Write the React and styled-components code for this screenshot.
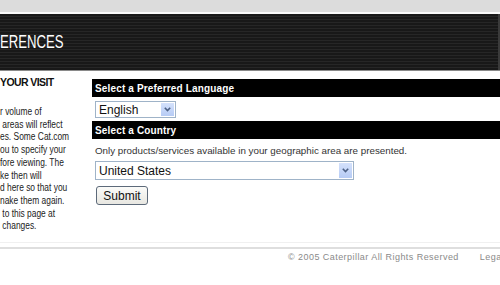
import React from 'react'
import styled, { createGlobalStyle } from 'styled-components'

const GlobalStyle = createGlobalStyle`
  html, body {
    margin: 0;
    padding: 0;
    background: #fff;
    overflow: hidden;
  }
  body {
    font-family: "Liberation Sans", Arial, sans-serif;
  }
`

const visitLines = [
  'r volume of',
  ' areas will reflect',
  'es. Some Cat.com',
  'ou to specify your',
  'fore viewing. The',
  'ke then will',
  'd here so that you',
  'nake them again.',
  ' to this page at',
  ' changes.',
]

const Page = styled.div`
  width: 500px;
  height: 285px;
  display: flex;
  flex-direction: column;
`

const BrowserStrip = styled.div`
  height: 12px;
  background: #dcdcdc;
  border-bottom: 2px solid #fafafa;
`

const Masthead = styled.div`
  height: 56px;
  display: flex;
  align-items: center;
  background: repeating-linear-gradient(
    to bottom,
    #181818 0px,
    #181818 2px,
    #262626 2px,
    #262626 3px
  );
  border-right: 2px solid #3a3a3a;
`

const Title = styled.h1`
  margin: 0;
  color: #fff;
  font-family: "Liberation Sans", Arial, sans-serif;
  font-weight: normal;
  font-size: 18px;
  transform: scaleX(0.73);
  transform-origin: left center;
`

const Body = styled.div`
  display: flex;
  border-top: 1px solid #8a8a8a;
  height: 171px;
`

const Sidebar = styled.div`
  width: 86px;
  padding-top: 5px;
  display: flex;
  flex-direction: column;
`

const SideHeading = styled.h2`
  margin: 0 0 17px 0;
  font-size: 10.5px;
  font-weight: bold;
  color: #111;
  letter-spacing: -0.6px;
`

const SideText = styled.div`
  transform: scaleX(0.8);
  transform-origin: left top;
`

const SideLine = styled.div`
  font-size: 10.5px;
  line-height: 12.7px;
  color: #222;
  white-space: pre;
`

const Main = styled.div`
  flex: 1;
  margin-left: 6px;
  padding-top: 8px;
  display: flex;
  flex-direction: column;
  align-items: flex-start;
`

const SectionBar = styled.div`
  align-self: stretch;
  height: 18px;
  background: #000;
  color: #fff;
  font-size: 10px;
  font-weight: bold;
  letter-spacing: 0.15px;
  display: flex;
  align-items: center;
  padding-left: 3px;
  margin-bottom: ${p => p.$gap}px;
`

const Note = styled.p`
  margin: 6px 0 5px 3px;
  font-size: 9.8px;
  color: #333;
`

const Dropdown = styled.div`
  width: ${p => p.$width}px;
  height: ${p => p.$height}px;
  margin-left: 3px;
  margin-bottom: ${p => p.$gap}px;
  box-sizing: border-box;
  border: 1px solid #9fb3c8;
  background: #fff;
  display: flex;
  align-items: center;
  justify-content: space-between;
  font-size: 12px;
  color: #111;
`

const DropdownValue = styled.span`
  padding-left: 3px;
`

const DropArrow = styled.span`
  width: 13px;
  align-self: stretch;
  margin: 1px;
  background: linear-gradient(#d4e1fb, #b6cbf5);
  display: flex;
  align-items: center;
  justify-content: center;
`

const SubmitButton = styled.button`
  margin-left: 4px;
  width: 52px;
  height: 19px;
  padding: 0;
  border: 1px solid #5d6a7a;
  border-radius: 3px;
  background: linear-gradient(#fbfbf9, #e8e7e1);
  font-family: "Liberation Sans", Arial, sans-serif;
  font-size: 12px;
  color: #111;
`

const Footer = styled.div`
  border-top: 1px solid #f0f0f0;
  padding-top: 4px;
`

const FooterRule = styled.div`
  height: 2px;
  background: #dedede;
`

const FooterText = styled.div`
  display: flex;
  gap: 21px;
  padding: 3px 0 0 288px;
  white-space: nowrap;
  font-size: 9px;
  letter-spacing: 0.45px;
  color: #8a8a8a;
`

function Chevron() {
  return (
    <svg width="7" height="5" viewBox="0 0 7 5">
      <path d="M0.8 0.8 L3.5 3.6 L6.2 0.8" fill="none" stroke="#4d6185" strokeWidth="1.6" />
    </svg>
  )
}

export default function App() {
  return (
    <Page>
      <GlobalStyle />
      <BrowserStrip />
      <Masthead>
        <Title>ERENCES</Title>
      </Masthead>
      <Body>
        <Sidebar>
          <SideHeading>YOUR VISIT</SideHeading>
          <SideText>
            {visitLines.map(line => <SideLine key={line}>{line}</SideLine>)}
          </SideText>
        </Sidebar>
        <Main>
          <SectionBar $gap={4}>Select a Preferred Language</SectionBar>
          <Dropdown $width={81} $height={17} $gap={3}>
            <DropdownValue>English</DropdownValue>
            <DropArrow><Chevron /></DropArrow>
          </Dropdown>
          <SectionBar $gap={0}>Select a Country</SectionBar>
          <Note>Only products/services available in your geographic area are presented.</Note>
          <Dropdown $width={259} $height={19} $gap={6}>
            <DropdownValue>United States</DropdownValue>
            <DropArrow><Chevron /></DropArrow>
          </Dropdown>
          <SubmitButton>Submit</SubmitButton>
        </Main>
      </Body>
      <Footer>
        <FooterRule />
        <FooterText>
          <span>© 2005 Caterpillar All Rights Reserved</span>
          <span>Legal</span>
        </FooterText>
      </Footer>
    </Page>
  )
}
